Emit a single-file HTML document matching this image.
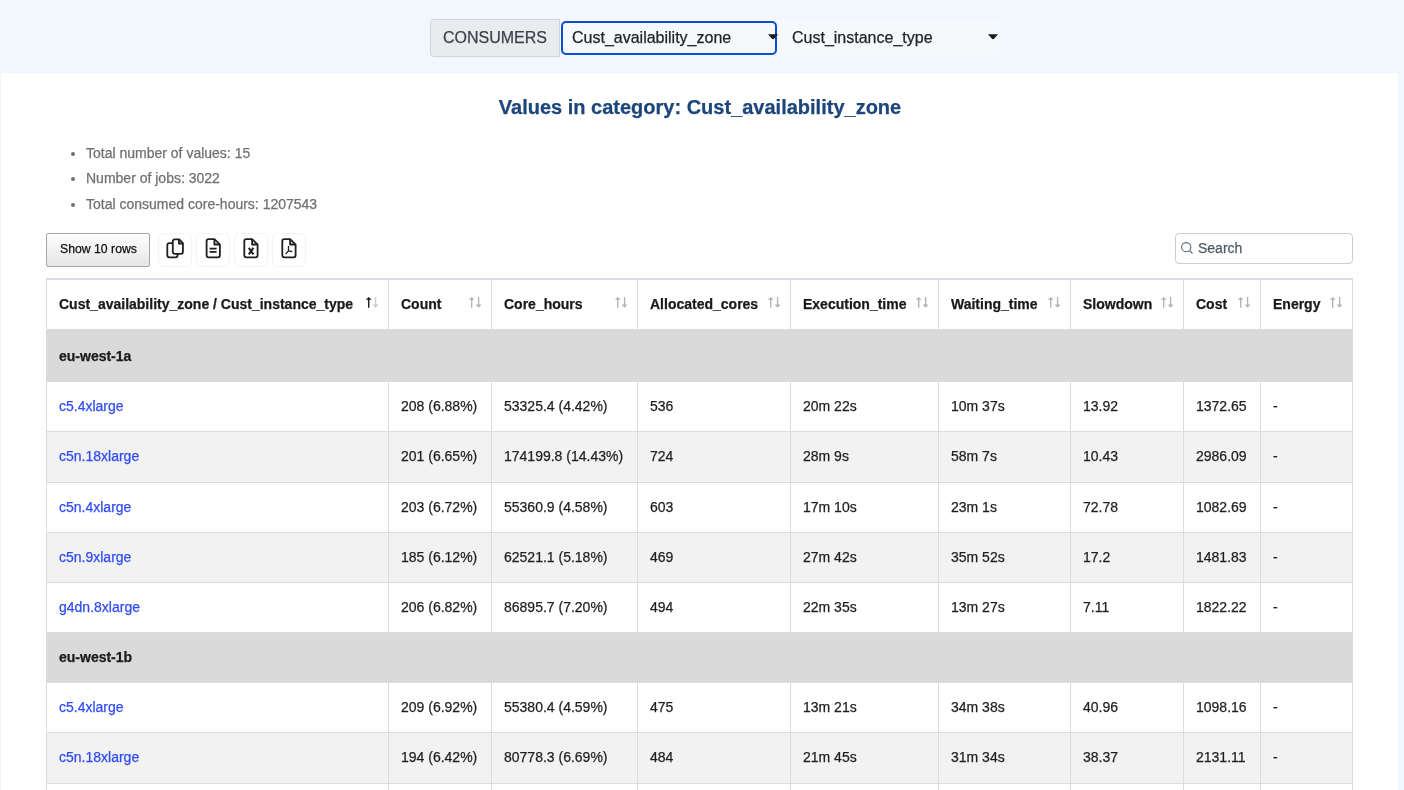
<!DOCTYPE html>
<html><head><meta charset="utf-8"><title>Values in category</title>
<style>
html,body{margin:0;padding:0}
body{width:1404px;height:790px;overflow:hidden;position:relative;background:#f2f7fe;font-family:"Liberation Sans",sans-serif;color:#212529}
.panel{position:absolute;left:0;top:72px;width:1397px;height:717px;background:#fff;border:1px solid #eff5fe;border-bottom:0}
.abs{position:absolute;white-space:nowrap}
.cons{position:absolute;left:430px;top:19px;width:128px;height:36px;background:#e9ecef;border:1px solid #ced4da;border-radius:4px 0 0 4px}
.cons span{position:absolute;left:12px;top:9px;font-size:16px;line-height:17px;color:#3d4349}
.sel{position:absolute;top:19px;height:38px;background:#f7f8fb;border-radius:0 4px 4px 0}
.sel span{position:absolute;top:10px;font-size:16px;line-height:17px;color:#212529;white-space:nowrap}
.ring{position:absolute;z-index:1;left:561px;top:21px;width:212px;height:30px;border:2px solid #0a4fd0;border-radius:5px}
.title{position:absolute;left:-2px;top:96px;width:1404px;text-align:center;font-weight:bold;font-size:20px;line-height:23px;color:#1c467b}
.list{position:absolute;left:86px;top:145px;font-size:14px;color:#707070}
.list div{position:relative;height:25.5px;line-height:16px;white-space:nowrap}
.list div:before{content:"";position:absolute;left:-15px;top:7px;width:4px;height:4px;border-radius:50%;background:#707070}
.btn10{position:absolute;left:46px;top:233px;width:102px;height:32px;border:1px solid #a6a6a6;border-radius:2px;background:linear-gradient(#fdfdfd,#e6e6e6)}
.btn10 span{position:absolute;left:13px;top:8px;font-size:12.25px;line-height:14px;color:#111;white-space:nowrap}
.ib{position:absolute;top:233px;width:32px;height:32px;border:1px solid #f2f3f5;border-radius:6px;background:#fff}
.ib svg{position:absolute;left:0;top:0}
.search{position:absolute;left:1175px;top:233px;width:176px;height:29px;border:1px solid #c9ced6;border-radius:4px;background:#fff}
.search span{position:absolute;left:22px;top:6px;font-size:14px;line-height:16px;color:#4f5b67}
.search svg{position:absolute;left:0;top:0}
.tbl .bg{position:absolute;left:47px;width:1305px}
.grp{background:#dadada}
.str{background:#f2f2f2}
.hl{position:absolute;left:46px;width:1307px;height:1px;background:#d9dde2}
.vl{position:absolute;width:1px;background:#d9dde2}
.th,.td,.gt,.lk{position:absolute;font-size:14px;line-height:16px;white-space:nowrap}
.th,.gt{font-weight:bold;color:#1a1a1a}
.td{color:#1f1f1f}
.lk{color:#2f4cf6}
.arr{position:absolute}

#wrap{position:absolute;left:0;top:0;width:1404px;height:790px;will-change:transform;-webkit-text-stroke:0.25px currentColor}

</style></head><body>
<div id="wrap">
<div class="panel"></div>
<div class="cons"><span>CONSUMERS</span></div>
<div class="sel" style="left:561px;width:216px"><span style="left:11px">Cust_availability_zone</span>
<svg style="position:absolute;z-index:2;left:206px;top:15px" width="12" height="6" viewBox="0 0 12 6"><path d="M1 0.2H11L7.3 4.4Q6 5.9 4.7 4.4Z" fill="#1b1b1b"/></svg></div>
<div class="ring"></div>
<div class="sel" style="left:777px;width:222px"><span style="left:15px">Cust_instance_type</span>
<svg style="position:absolute;left:210px;top:15px" width="12" height="6" viewBox="0 0 12 6"><path d="M1 0.2H11L7.3 4.4Q6 5.9 4.7 4.4Z" fill="#1b1b1b"/></svg></div>
<div class="title">Values in category: Cust_availability_zone</div>
<div class="list">
<div style="height:25px">Total number of values: 15</div>
<div style="height:26px">Number of jobs: 3022</div>
<div>Total consumed core-hours: 1207543</div>
</div>
<div class="btn10"><span>Show 10 rows</span></div>
<div class="ib" style="left:158px"><svg width="34" height="34" viewBox="0 0 34 34" fill="none" stroke="#1d1f22" stroke-width="1.8" stroke-linejoin="round"><g transform="translate(-1 -0.9)">
<path d="M14.8 10.1H11.3Q9.3 10.1 9.3 12.1V22.2Q9.3 24.2 11.3 24.2H17.6Q19.6 24.2 19.6 22.2V20.7"/>
<path d="M16.8 6.3H21.2L24.9 10V18.7Q24.9 20.7 22.9 20.7H16.8Q14.8 20.7 14.8 18.7V8.3Q14.8 6.3 16.8 6.3Z"/>
<path d="M20.9 6.3V10.4H24.9"/></g></svg></div>
<div class="ib" style="left:196px"><svg width="34" height="34" viewBox="0 0 34 34" fill="none" stroke="#1d1f22" stroke-width="1.8" stroke-linejoin="round"><g transform="translate(-1 -0.8)">
<path d="M12.6 5.9H18.4L23.9 11.4V22.1Q23.9 24.1 21.9 24.1H12.6Q10.6 24.1 10.6 22.1V7.9Q10.6 5.9 12.6 5.9Z"/>
<path d="M18.4 5.9V11.3H23.9"/>
<path d="M13.6 15.4H20.6M13.6 18.7H20.6" stroke-width="1.7"/></g></svg></div>
<div class="ib" style="left:234px"><svg width="34" height="34" viewBox="0 0 34 34" fill="none" stroke="#1d1f22" stroke-width="1.8" stroke-linejoin="round"><g transform="translate(-1 -0.8)">
<path d="M12.3 5.9H18.1L23.6 11.4V22.1Q23.6 24.1 21.6 24.1H12.3Q10.3 24.1 10.3 22.1V7.9Q10.3 5.9 12.3 5.9Z"/>
<path d="M18.1 5.9V11.3H23.6"/>
<path d="M14.8 14.7L19.4 21.1M19.4 14.7L14.8 21.1" stroke-width="2"/></g></svg></div>
<div class="ib" style="left:272px"><svg width="34" height="34" viewBox="0 0 34 34" fill="none" stroke="#1d1f22" stroke-width="1.8" stroke-linejoin="round"><g transform="translate(-0.3 -0.8)">
<path d="M11.6 5.9H17.4L22.9 11.4V22.1Q22.9 24.1 20.9 24.1H11.6Q9.6 24.1 9.6 22.1V7.9Q9.6 5.9 11.6 5.9Z"/>
<path d="M17.4 5.9V11.3H22.9"/>
<path d="M15.8 12.9V17.6M15.8 17.6L12.9 20.9M15.8 17.6L19.6 18.5" stroke-width="1.3"/></g></svg></div>
<div class="search"><svg width="30" height="30" viewBox="0 0 30 30" fill="none" stroke="#5d6670" stroke-width="1.1"><circle cx="10.2" cy="13.2" r="4.6"/><path d="M13.5 16.5L16.5 19.5"/></svg><span>Search</span></div>
<div class="tbl">
<div class="bg grp" style="top:330px;height:51px"></div>
<div class="bg str" style="top:432px;height:50px"></div>
<div class="bg str" style="top:533px;height:49px"></div>
<div class="bg grp" style="top:633px;height:49px"></div>
<div class="bg str" style="top:733px;height:50px"></div>
<div class="hl" style="top:278px;height:2px"></div>
<div class="hl" style="top:329px"></div>
<div class="hl" style="top:381px"></div>
<div class="hl" style="top:431px"></div>
<div class="hl" style="top:482px"></div>
<div class="hl" style="top:532px"></div>
<div class="hl" style="top:582px"></div>
<div class="hl" style="top:632px"></div>
<div class="hl" style="top:682px"></div>
<div class="hl" style="top:732px"></div>
<div class="hl" style="top:783px"></div>
<div class="vl" style="left:46px;top:278px;height:520px"></div>
<div class="vl" style="left:1352px;top:278px;height:520px"></div>
<div class="vl" style="left:388px;top:278px;height:52px"></div>
<div class="vl" style="left:388px;top:381px;height:51px"></div>
<div class="vl" style="left:388px;top:431px;height:52px"></div>
<div class="vl" style="left:388px;top:482px;height:51px"></div>
<div class="vl" style="left:388px;top:532px;height:51px"></div>
<div class="vl" style="left:388px;top:582px;height:51px"></div>
<div class="vl" style="left:388px;top:682px;height:51px"></div>
<div class="vl" style="left:388px;top:732px;height:52px"></div>
<div class="vl" style="left:388px;top:783px;height:51px"></div>
<div class="vl" style="left:491px;top:278px;height:52px"></div>
<div class="vl" style="left:491px;top:381px;height:51px"></div>
<div class="vl" style="left:491px;top:431px;height:52px"></div>
<div class="vl" style="left:491px;top:482px;height:51px"></div>
<div class="vl" style="left:491px;top:532px;height:51px"></div>
<div class="vl" style="left:491px;top:582px;height:51px"></div>
<div class="vl" style="left:491px;top:682px;height:51px"></div>
<div class="vl" style="left:491px;top:732px;height:52px"></div>
<div class="vl" style="left:491px;top:783px;height:51px"></div>
<div class="vl" style="left:637px;top:278px;height:52px"></div>
<div class="vl" style="left:637px;top:381px;height:51px"></div>
<div class="vl" style="left:637px;top:431px;height:52px"></div>
<div class="vl" style="left:637px;top:482px;height:51px"></div>
<div class="vl" style="left:637px;top:532px;height:51px"></div>
<div class="vl" style="left:637px;top:582px;height:51px"></div>
<div class="vl" style="left:637px;top:682px;height:51px"></div>
<div class="vl" style="left:637px;top:732px;height:52px"></div>
<div class="vl" style="left:637px;top:783px;height:51px"></div>
<div class="vl" style="left:790px;top:278px;height:52px"></div>
<div class="vl" style="left:790px;top:381px;height:51px"></div>
<div class="vl" style="left:790px;top:431px;height:52px"></div>
<div class="vl" style="left:790px;top:482px;height:51px"></div>
<div class="vl" style="left:790px;top:532px;height:51px"></div>
<div class="vl" style="left:790px;top:582px;height:51px"></div>
<div class="vl" style="left:790px;top:682px;height:51px"></div>
<div class="vl" style="left:790px;top:732px;height:52px"></div>
<div class="vl" style="left:790px;top:783px;height:51px"></div>
<div class="vl" style="left:938px;top:278px;height:52px"></div>
<div class="vl" style="left:938px;top:381px;height:51px"></div>
<div class="vl" style="left:938px;top:431px;height:52px"></div>
<div class="vl" style="left:938px;top:482px;height:51px"></div>
<div class="vl" style="left:938px;top:532px;height:51px"></div>
<div class="vl" style="left:938px;top:582px;height:51px"></div>
<div class="vl" style="left:938px;top:682px;height:51px"></div>
<div class="vl" style="left:938px;top:732px;height:52px"></div>
<div class="vl" style="left:938px;top:783px;height:51px"></div>
<div class="vl" style="left:1070px;top:278px;height:52px"></div>
<div class="vl" style="left:1070px;top:381px;height:51px"></div>
<div class="vl" style="left:1070px;top:431px;height:52px"></div>
<div class="vl" style="left:1070px;top:482px;height:51px"></div>
<div class="vl" style="left:1070px;top:532px;height:51px"></div>
<div class="vl" style="left:1070px;top:582px;height:51px"></div>
<div class="vl" style="left:1070px;top:682px;height:51px"></div>
<div class="vl" style="left:1070px;top:732px;height:52px"></div>
<div class="vl" style="left:1070px;top:783px;height:51px"></div>
<div class="vl" style="left:1183px;top:278px;height:52px"></div>
<div class="vl" style="left:1183px;top:381px;height:51px"></div>
<div class="vl" style="left:1183px;top:431px;height:52px"></div>
<div class="vl" style="left:1183px;top:482px;height:51px"></div>
<div class="vl" style="left:1183px;top:532px;height:51px"></div>
<div class="vl" style="left:1183px;top:582px;height:51px"></div>
<div class="vl" style="left:1183px;top:682px;height:51px"></div>
<div class="vl" style="left:1183px;top:732px;height:52px"></div>
<div class="vl" style="left:1183px;top:783px;height:51px"></div>
<div class="vl" style="left:1260px;top:278px;height:52px"></div>
<div class="vl" style="left:1260px;top:381px;height:51px"></div>
<div class="vl" style="left:1260px;top:431px;height:52px"></div>
<div class="vl" style="left:1260px;top:482px;height:51px"></div>
<div class="vl" style="left:1260px;top:532px;height:51px"></div>
<div class="vl" style="left:1260px;top:582px;height:51px"></div>
<div class="vl" style="left:1260px;top:682px;height:51px"></div>
<div class="vl" style="left:1260px;top:732px;height:52px"></div>
<div class="vl" style="left:1260px;top:783px;height:51px"></div>
<span class="th" style="left:59px;top:296px">Cust_availability_zone / Cust_instance_type</span>
<svg class="arr" style="left:364px;top:295px" width="16" height="14" viewBox="0 0 16 14"><path d="M4.70 3.2V12.7" stroke="#1c1c1c" stroke-width="1.4" fill="none"/><path d="M1.70 4.8L4.70 2L7.70 4.8Z" fill="#1c1c1c"/><path d="M11.60 2V11.5" stroke="#cbcbcb" stroke-width="1.4" fill="none"/><path d="M8.60 9.4L11.60 12.7L14.60 9.4Z" fill="#cbcbcb"/></svg>
<span class="th" style="left:401px;top:296px">Count</span>
<svg class="arr" style="left:467px;top:295px" width="16" height="14" viewBox="0 0 16 14"><path d="M4.70 3.2V12.7" stroke="#b4b4b4" stroke-width="1.4" fill="none"/><path d="M1.70 4.8L4.70 2L7.70 4.8Z" fill="#b4b4b4"/><path d="M11.60 2V11.5" stroke="#b4b4b4" stroke-width="1.4" fill="none"/><path d="M8.60 9.4L11.60 12.7L14.60 9.4Z" fill="#b4b4b4"/></svg>
<span class="th" style="left:504px;top:296px">Core_hours</span>
<svg class="arr" style="left:613px;top:295px" width="16" height="14" viewBox="0 0 16 14"><path d="M4.70 3.2V12.7" stroke="#b4b4b4" stroke-width="1.4" fill="none"/><path d="M1.70 4.8L4.70 2L7.70 4.8Z" fill="#b4b4b4"/><path d="M11.60 2V11.5" stroke="#b4b4b4" stroke-width="1.4" fill="none"/><path d="M8.60 9.4L11.60 12.7L14.60 9.4Z" fill="#b4b4b4"/></svg>
<span class="th" style="left:650px;top:296px">Allocated_cores</span>
<svg class="arr" style="left:766px;top:295px" width="16" height="14" viewBox="0 0 16 14"><path d="M4.70 3.2V12.7" stroke="#b4b4b4" stroke-width="1.4" fill="none"/><path d="M1.70 4.8L4.70 2L7.70 4.8Z" fill="#b4b4b4"/><path d="M11.60 2V11.5" stroke="#b4b4b4" stroke-width="1.4" fill="none"/><path d="M8.60 9.4L11.60 12.7L14.60 9.4Z" fill="#b4b4b4"/></svg>
<span class="th" style="left:803px;top:296px">Execution_time</span>
<svg class="arr" style="left:914px;top:295px" width="16" height="14" viewBox="0 0 16 14"><path d="M4.70 3.2V12.7" stroke="#b4b4b4" stroke-width="1.4" fill="none"/><path d="M1.70 4.8L4.70 2L7.70 4.8Z" fill="#b4b4b4"/><path d="M11.60 2V11.5" stroke="#b4b4b4" stroke-width="1.4" fill="none"/><path d="M8.60 9.4L11.60 12.7L14.60 9.4Z" fill="#b4b4b4"/></svg>
<span class="th" style="left:951px;top:296px">Waiting_time</span>
<svg class="arr" style="left:1046px;top:295px" width="16" height="14" viewBox="0 0 16 14"><path d="M4.70 3.2V12.7" stroke="#b4b4b4" stroke-width="1.4" fill="none"/><path d="M1.70 4.8L4.70 2L7.70 4.8Z" fill="#b4b4b4"/><path d="M11.60 2V11.5" stroke="#b4b4b4" stroke-width="1.4" fill="none"/><path d="M8.60 9.4L11.60 12.7L14.60 9.4Z" fill="#b4b4b4"/></svg>
<span class="th" style="left:1083px;top:296px">Slowdown</span>
<svg class="arr" style="left:1159px;top:295px" width="16" height="14" viewBox="0 0 16 14"><path d="M4.70 3.2V12.7" stroke="#b4b4b4" stroke-width="1.4" fill="none"/><path d="M1.70 4.8L4.70 2L7.70 4.8Z" fill="#b4b4b4"/><path d="M11.60 2V11.5" stroke="#b4b4b4" stroke-width="1.4" fill="none"/><path d="M8.60 9.4L11.60 12.7L14.60 9.4Z" fill="#b4b4b4"/></svg>
<span class="th" style="left:1196px;top:296px">Cost</span>
<svg class="arr" style="left:1236px;top:295px" width="16" height="14" viewBox="0 0 16 14"><path d="M4.70 3.2V12.7" stroke="#b4b4b4" stroke-width="1.4" fill="none"/><path d="M1.70 4.8L4.70 2L7.70 4.8Z" fill="#b4b4b4"/><path d="M11.60 2V11.5" stroke="#b4b4b4" stroke-width="1.4" fill="none"/><path d="M8.60 9.4L11.60 12.7L14.60 9.4Z" fill="#b4b4b4"/></svg>
<span class="th" style="left:1273px;top:296px">Energy</span>
<svg class="arr" style="left:1328px;top:295px" width="16" height="14" viewBox="0 0 16 14"><path d="M4.70 3.2V12.7" stroke="#b4b4b4" stroke-width="1.4" fill="none"/><path d="M1.70 4.8L4.70 2L7.70 4.8Z" fill="#b4b4b4"/><path d="M11.60 2V11.5" stroke="#b4b4b4" stroke-width="1.4" fill="none"/><path d="M8.60 9.4L11.60 12.7L14.60 9.4Z" fill="#b4b4b4"/></svg>
<span class="gt" style="left:59px;top:348px">eu-west-1a</span>
<span class="lk" style="left:59px;top:398px">c5.4xlarge</span>
<span class="td" style="left:401px;top:398px">208 (6.88%)</span>
<span class="td" style="left:504px;top:398px">53325.4 (4.42%)</span>
<span class="td" style="left:650px;top:398px">536</span>
<span class="td" style="left:803px;top:398px">20m 22s</span>
<span class="td" style="left:951px;top:398px">10m 37s</span>
<span class="td" style="left:1083px;top:398px">13.92</span>
<span class="td" style="left:1196px;top:398px">1372.65</span>
<span class="td" style="left:1273px;top:398px">-</span>
<span class="lk" style="left:59px;top:448px">c5n.18xlarge</span>
<span class="td" style="left:401px;top:448px">201 (6.65%)</span>
<span class="td" style="left:504px;top:448px">174199.8 (14.43%)</span>
<span class="td" style="left:650px;top:448px">724</span>
<span class="td" style="left:803px;top:448px">28m 9s</span>
<span class="td" style="left:951px;top:448px">58m 7s</span>
<span class="td" style="left:1083px;top:448px">10.43</span>
<span class="td" style="left:1196px;top:448px">2986.09</span>
<span class="td" style="left:1273px;top:448px">-</span>
<span class="lk" style="left:59px;top:499px">c5n.4xlarge</span>
<span class="td" style="left:401px;top:499px">203 (6.72%)</span>
<span class="td" style="left:504px;top:499px">55360.9 (4.58%)</span>
<span class="td" style="left:650px;top:499px">603</span>
<span class="td" style="left:803px;top:499px">17m 10s</span>
<span class="td" style="left:951px;top:499px">23m 1s</span>
<span class="td" style="left:1083px;top:499px">72.78</span>
<span class="td" style="left:1196px;top:499px">1082.69</span>
<span class="td" style="left:1273px;top:499px">-</span>
<span class="lk" style="left:59px;top:549px">c5n.9xlarge</span>
<span class="td" style="left:401px;top:549px">185 (6.12%)</span>
<span class="td" style="left:504px;top:549px">62521.1 (5.18%)</span>
<span class="td" style="left:650px;top:549px">469</span>
<span class="td" style="left:803px;top:549px">27m 42s</span>
<span class="td" style="left:951px;top:549px">35m 52s</span>
<span class="td" style="left:1083px;top:549px">17.2</span>
<span class="td" style="left:1196px;top:549px">1481.83</span>
<span class="td" style="left:1273px;top:549px">-</span>
<span class="lk" style="left:59px;top:599px">g4dn.8xlarge</span>
<span class="td" style="left:401px;top:599px">206 (6.82%)</span>
<span class="td" style="left:504px;top:599px">86895.7 (7.20%)</span>
<span class="td" style="left:650px;top:599px">494</span>
<span class="td" style="left:803px;top:599px">22m 35s</span>
<span class="td" style="left:951px;top:599px">13m 27s</span>
<span class="td" style="left:1083px;top:599px">7.11</span>
<span class="td" style="left:1196px;top:599px">1822.22</span>
<span class="td" style="left:1273px;top:599px">-</span>
<span class="gt" style="left:59px;top:649px">eu-west-1b</span>
<span class="lk" style="left:59px;top:699px">c5.4xlarge</span>
<span class="td" style="left:401px;top:699px">209 (6.92%)</span>
<span class="td" style="left:504px;top:699px">55380.4 (4.59%)</span>
<span class="td" style="left:650px;top:699px">475</span>
<span class="td" style="left:803px;top:699px">13m 21s</span>
<span class="td" style="left:951px;top:699px">34m 38s</span>
<span class="td" style="left:1083px;top:699px">40.96</span>
<span class="td" style="left:1196px;top:699px">1098.16</span>
<span class="td" style="left:1273px;top:699px">-</span>
<span class="lk" style="left:59px;top:749px">c5n.18xlarge</span>
<span class="td" style="left:401px;top:749px">194 (6.42%)</span>
<span class="td" style="left:504px;top:749px">80778.3 (6.69%)</span>
<span class="td" style="left:650px;top:749px">484</span>
<span class="td" style="left:803px;top:749px">21m 45s</span>
<span class="td" style="left:951px;top:749px">31m 34s</span>
<span class="td" style="left:1083px;top:749px">38.37</span>
<span class="td" style="left:1196px;top:749px">2131.11</span>
<span class="td" style="left:1273px;top:749px">-</span>
<span class="lk" style="left:59px;top:800px">c5n.4xlarge</span>
<span class="td" style="left:401px;top:800px">198 (6.55%)</span>
<span class="td" style="left:504px;top:800px">58000.1 (4.80%)</span>
<span class="td" style="left:650px;top:800px">512</span>
<span class="td" style="left:803px;top:800px">19m 2s</span>
<span class="td" style="left:951px;top:800px">20m 11s</span>
<span class="td" style="left:1083px;top:800px">22.5</span>
<span class="td" style="left:1196px;top:800px">1101.4</span>
<span class="td" style="left:1273px;top:800px">-</span>
</div>
</div>
</body></html>
